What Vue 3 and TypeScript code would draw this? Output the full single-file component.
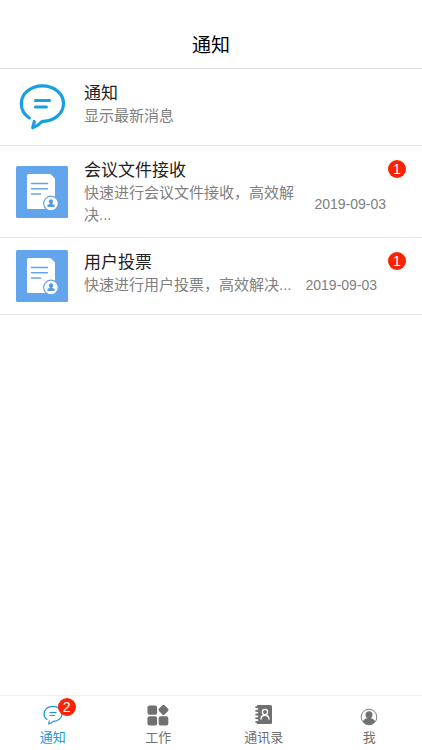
<script setup lang="ts">
import { ref } from 'vue'

interface Notice {
  title: string
  text: string
  date?: string
  count?: number
  icon: 'chat' | 'doc'
}

interface Tab {
  label: string
  icon: 'chat' | 'apps' | 'book' | 'user'
  count?: number
}

const notices: Notice[] = [
  { title: '通知', text: '显示最新消息', icon: 'chat' },
  { title: '会议文件接收', text: '快速进行会议文件接收，高效解决...', date: '2019-09-03', count: 1, icon: 'doc' },
  { title: '用户投票', text: '快速进行用户投票，高效解决...', date: '2019-09-03', count: 1, icon: 'doc' },
]

const tabs: Tab[] = [
  { label: '通知', icon: 'chat', count: 2 },
  { label: '工作', icon: 'apps' },
  { label: '通讯录', icon: 'book' },
  { label: '我', icon: 'user' },
]

const active = ref(0)
</script>

<template>
  <div class="page">
    <header class="header">
      <h1>通知</h1>
    </header>

    <main class="content">
      <ul class="list">
        <li v-for="n in notices" :key="n.title">
          <a href="#" class="row" @click.prevent>
            <svg v-if="n.icon === 'chat'" class="row-icon" viewBox="0 0 52 52" aria-hidden="true">
              <g fill="none" stroke="#1a9fe3" stroke-width="3.200" stroke-linecap="round" stroke-linejoin="round">
                <path d="M13.300 37C8 33.500 5.300 28.500 5.300 22.800C5.300 12.600 14.500 4.800 26.300 4.800C38.300 4.800 47.500 12.600 47.500 22.500C47.500 32.500 38 40.700 26.300 40.300C23.500 43.500 20.500 45.500 16.700 46.800L18.300 40.500" />
                <path d="M19.500 19.500H33.500M19.500 26H30.300" />
              </g>
            </svg>
            <svg v-else class="row-icon" viewBox="0 0 52 52" aria-hidden="true">
              <rect width="52" height="52" rx="1.500" fill="#62a5ed" />
              <path d="M12.500 8H34.500L39 12.500V43H12.500Q11 43 11 41.500V9.500Q11 8 12.500 8Z" fill="#fff" />
              <path d="M15.500 17.500H31.500M15.500 22.700H31.500M15.500 28H24.500" stroke="#62a5ed" stroke-width="1.500" stroke-linecap="round" />
              <circle cx="35" cy="37.500" r="7.300" fill="#fff" stroke="#62a5ed" stroke-width="1.200" />
              <path d="M35 33.200A2.200 2.200 0 0 1 36.300 37.200V38L38.500 38.800V41H31.500V38.800L33.700 38V37.200A2.200 2.200 0 0 1 35 33.200Z" fill="#5b9bdd" />
            </svg>
            <div class="body">
              <h2>{{ n.title }}</h2>
              <div class="detail">
                <p>{{ n.text }}</p>
                <time v-if="n.date" :datetime="n.date">{{ n.date }}</time>
              </div>
            </div>
            <span v-if="n.count" class="badge">{{ n.count }}</span>
          </a>
        </li>
      </ul>
    </main>

    <nav class="tabs">
      <button
        v-for="(t, i) in tabs"
        :key="t.label"
        type="button"
        class="tab"
        :class="{ active: i === active }"
        @click="active = i"
      >
        <span class="tab-icon">
          <svg v-if="t.icon === 'chat'" viewBox="0 0 20 20" aria-hidden="true">
            <g fill="none" stroke="currentColor" stroke-width="1.200" stroke-linecap="round" stroke-linejoin="round">
              <path d="M4 14.500C2 13 1 11.300 1 9C1 4.800 4.800 1.300 10 1.300C15.200 1.300 19 4.800 19 9C19 13.200 15 16.500 10 16.300C8.800 17.700 7.500 18.400 5.700 18.900L6.300 16" />
              <path d="M7 7.700H13M7 10.500H11.700" />
            </g>
          </svg>
          <svg v-else-if="t.icon === 'apps'" viewBox="0 0 20 20" aria-hidden="true">
            <g fill="currentColor">
              <rect x="-0.500" y="0.500" width="9.600" height="9.200" rx="2" />
              <rect x="-0.500" y="11.300" width="9.600" height="9.200" rx="2" />
              <rect x="10.700" y="11.300" width="9.600" height="9.200" rx="2" />
              <rect x="11.500" y="0.900" width="8" height="8" rx="1.500" transform="rotate(45 15.500 4.900)" />
            </g>
          </svg>
          <svg v-else-if="t.icon === 'book'" viewBox="0 0 20 20" aria-hidden="true">
            <path d="M4 0H16.500Q18 0 18 1.500V17.500Q18 19 16.500 19H4Q2.500 19 2.500 17.500V1.500Q2.500 0 4 0Z" fill="currentColor" />
            <path d="M1 4H4.200M1 7.700H4.200M1 11.400H4.200M1 15.100H4.200" stroke="#fff" stroke-width="1.700" />
            <path d="M1.300 2.200H4M1.300 5.900H4M1.300 9.600H4M1.300 13.300H4M1.300 17H4" stroke="currentColor" stroke-width="1.500" />
            <g fill="none" stroke="#fff" stroke-width="1.400" stroke-linecap="round">
              <circle cx="11" cy="7" r="2.600" />
              <path d="M7 14C7.200 11.500 8.800 10.200 11 10.200C13.200 10.200 14.800 11.500 15 14" />
            </g>
          </svg>
          <svg v-else viewBox="0 0 20 20" aria-hidden="true">
            <circle cx="10" cy="12" r="7.800" fill="none" stroke="currentColor" stroke-width="0.900" />
            <circle cx="10" cy="9.800" r="3.500" fill="currentColor" />
            <path d="M4 16.500C4.500 14.300 6.500 13.700 8.500 13H11.500C13.500 13.700 15.500 14.300 16 16.500C14.500 18.600 12.400 19.700 10 19.700C7.600 19.700 5.500 18.600 4 16.500Z" fill="currentColor" />
          </svg>
          <span v-if="t.count" class="badge tab-badge">{{ t.count }}</span>
        </span>
        <span>{{ t.label }}</span>
      </button>
    </nav>
  </div>
</template>

<style>
body {
  margin: 0;
  background: #fff;
}
</style>

<style scoped>
.page {
  display: flex;
  flex-direction: column;
  min-height: 100vh;
  font-family: "Liberation Sans", "Noto Sans CJK SC", sans-serif;
  color: #222;
}
.header {
  padding: 24px 16px 0;
  border-bottom: 1px solid #dcdcdc;
}
h1,
h2,
p,
ul {
  margin: 0;
  padding: 0;
  font-weight: 400;
}
h1 {
  font-size: 19px;
  line-height: 44px;
  text-align: center;
  color: #000;
}
.content {
  flex: 1;
}
.list {
  list-style: none;
}
.row {
  box-sizing: border-box;
  display: flex;
  align-items: center;
  gap: 16px;
  min-height: 77px;
  padding: 11px 16px;
  border-bottom: 1px solid #e4e4e4;
  color: inherit;
  text-decoration: none;
}
.row-icon {
  flex: none;
  width: 52px;
  height: 52px;
}
.body {
  flex: 1;
  min-width: 0;
  align-self: flex-start;
}
h2 {
  padding-top: 2px;
  font-size: 17px;
  line-height: 23px;
}
.detail {
  display: flex;
  align-items: center;
  gap: 14px;
  color: #808080;
}
p {
  font-size: 15px;
  line-height: 22px;
}
time {
  flex: none;
  font-size: 14px;
}
.badge {
  box-sizing: border-box;
  flex: none;
  align-self: flex-start;
  min-width: 18px;
  height: 18px;
  margin-top: 3px;
  border-radius: 9px;
  background: #fb2203;
  color: #fff;
  font-size: 14px;
  line-height: 18px;
  text-align: center;
}
.row .badge {
  margin-left: -14px;
}
.tabs {
  display: flex;
  border-top: 1px solid #f0f0f0;
}
.tab {
  flex: 1;
  display: flex;
  flex-direction: column;
  align-items: center;
  gap: 4px;
  padding: 9px 0 3px;
  border: 0;
  background: none;
  color: #707070;
  font-family: inherit;
  font-size: 13px;
  line-height: 18px;
}
.tab.active {
  color: #2596d8;
}
.tab-icon {
  position: relative;
  width: 20px;
  height: 20px;
}
.tab-icon svg {
  display: block;
  width: 100%;
  height: 100%;
  overflow: visible;
}
.tab-badge {
  position: absolute;
  top: -7px;
  left: 15px;
  margin: 0;
}
</style>
